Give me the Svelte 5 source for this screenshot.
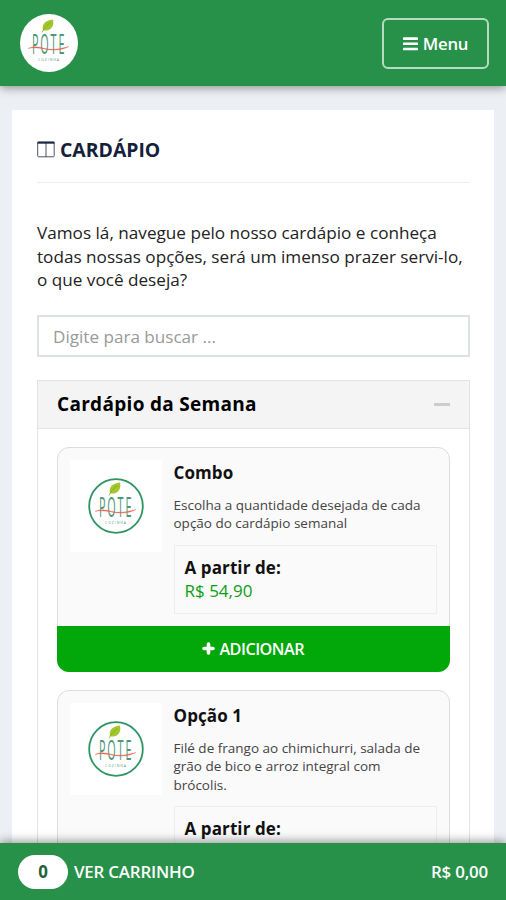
<script>
  let search = $state('');
  let open = $state(true);
  let cart = $state({ count: 0, total: 0 });

  const items = [
    {
      name: 'Combo',
      description: 'Escolha a quantidade desejada de cada opção do cardápio semanal',
      price: 54.9
    },
    {
      name: 'Opção 1',
      description: 'Filé de frango ao chimichurri, salada de grão de bico e arroz integral com brócolis.',
      price: 18.9
    }
  ];

  let filtered = $derived(
    items.filter((item) => item.name.toLowerCase().includes(search.toLowerCase()))
  );

  function formatPrice(value) {
    return 'R$ ' + value.toFixed(2).replace('.', ',');
  }

  function add(item) {
    cart.count += 1;
    cart.total += item.price;
  }
</script>

{#snippet logo(ring)}
  <svg class="logo" viewBox="0 0 58 58">
    <circle cx="29" cy="29" r={ring ? 26.8 : 29} fill="#fff" stroke={ring ? '#2c9561' : 'none'} stroke-width="1.8" />
    <path d="M23 16.500C21.500 10 25 6.500 33 5.500C34.500 12 31 17.500 23 16.500Z" fill="#a2c62c" />
    <path d="M22 18.500C24 14 27 11 30.500 8.500" fill="none" stroke="#7fa821" stroke-width=".7" />
    <text class="brand" transform="translate(12 40) scale(.4 1)" textLength="81" lengthAdjust="spacing">POTE</text>
    <path d="M8 34.500C14 31.500 19 33 25 34.500S37 35.500 49 32.500C43 36 35 36.800 27 35.500S14 33 8 34.500Z" fill="#e8604c" stroke="#e8604c" stroke-width=".3" />
    <text class="sub" x="18" y="47" textLength="21">COZINHA</text>
  </svg>
{/snippet}

<div class="page">
  <header>
    {@render logo(false)}
    <button class="menu">
      <svg width="15" height="14" viewBox="0 0 15 14" fill="#fff">
        <rect width="15" height="2.600" y=".3" rx=".6" />
        <rect width="15" height="2.600" y="5.500" rx=".6" />
        <rect width="15" height="2.600" y="10.700" rx=".6" />
      </svg>
      <span>Menu</span>
    </button>
  </header>

  <main>
    <div class="panel">
      <h1>
        <svg width="18" height="17" viewBox="0 0 18 17" fill="none" stroke="#4c5562">
          <rect x=".7" y="1" width="16.500" height="14.800" rx="1" />
          <path d="M9 2v14" />
          <path d="M.5 1.700h17" stroke="#1d2a42" stroke-width="2" />
        </svg>
        <span>CARDÁPIO</span>
      </h1>

      <p class="intro">
        Vamos lá, navegue pelo nosso cardápio e conheça todas nossas opções, será um imenso prazer servi-lo, o que você deseja?
      </p>

      <input type="text" placeholder="Digite para buscar ..." bind:value={search} />

      <section>
        <button class="section-header" onclick={() => (open = !open)}>
          <span>Cardápio da Semana</span>
          <i class="dash"></i>
        </button>
        {#if open}
          <div class="section-body">
            {#each filtered as item}
              <article>
                <div class="item">
                  <div class="thumb">{@render logo(true)}</div>
                  <div class="details">
                    <h2>{item.name}</h2>
                    <p>{item.description}</p>
                    <div class="price">
                      <strong>A partir de:</strong>
                      <span>{formatPrice(item.price)}</span>
                    </div>
                  </div>
                </div>
                <button class="add" onclick={() => add(item)}>
                  <svg width="13" height="13" viewBox="0 0 13 13">
                    <path d="M6.500 2v9M2 6.500h9" stroke="#fff" stroke-width="3.600" stroke-linecap="round" />
                  </svg>
                  <span>ADICIONAR</span>
                </button>
              </article>
            {/each}
          </div>
        {/if}
      </section>
    </div>
  </main>

  <footer>
    <span class="count">{cart.count}</span>
    <span class="cart">VER CARRINHO</span>
    <span class="total">{formatPrice(cart.total)}</span>
  </footer>
</div>

<style>
  :global(body) {
    margin: 0;
    background: #ecf0f4;
  }

  .page {
    display: flex;
    flex-direction: column;
    height: 100vh;
    overflow: hidden;
    font-family: 'Open Sans', 'Noto Sans', sans-serif;
    color: #111;
  }

  * {
    box-sizing: border-box;
  }

  button {
    font-family: inherit;
    cursor: pointer;
  }

  header {
    position: relative;
    z-index: 1;
    flex: none;
    display: flex;
    align-items: center;
    justify-content: space-between;
    height: 86px;
    padding: 0 17px 0 20px;
    background: #289149;
    box-shadow: 0 2px 9px rgba(0, 0, 0, 0.4);
  }

  .logo {
    display: block;
    width: 58px;
    height: 58px;
  }

  .brand {
    font-size: 27px;
    font-weight: 400;
    fill: #4d9679;
  }

  .sub {
    font-size: 3.5px;
    fill: #5b9c80;
  }

  .menu {
    display: flex;
    align-items: center;
    justify-content: center;
    gap: 5px;
    width: 107px;
    height: 51px;
    margin-top: 1px;
    padding: 0;
    color: #fff;
    font-size: 16.8px;
    font-weight: 600;
    letter-spacing: -0.3px;
    background: none;
    border: 2px solid #b5dcc0;
    border-radius: 6px;
  }

  main {
    flex: 1;
    min-height: 0;
    overflow: hidden;
    padding: 24px 12px 0;
  }

  .panel {
    padding: 24px 24.5px 24px 25px;
    background: #fff;
  }

  h1 {
    display: flex;
    align-items: center;
    gap: 5px;
    height: 49px;
    margin: 0;
    padding-bottom: 17px;
    border-bottom: 1px solid #eee;
    font-size: 19.4px;
    font-weight: 700;
    color: #15203a;
  }

  .intro {
    margin: 38px 0 23px;
    font-size: 17.15px;
    line-height: 23.5px;
    color: #222;
  }

  input {
    display: block;
    width: 100%;
    height: 42px;
    margin-bottom: 23px;
    padding: 1px 14px 0;
    font-family: inherit;
    font-size: 17.1px;
    border: 2px solid #dee1e5;
    border-radius: 0;
    outline: none;
  }

  input::placeholder {
    color: #999;
  }

  section {
    border: 1px solid #e2e3e5;
  }

  .section-header {
    display: flex;
    align-items: center;
    justify-content: space-between;
    width: 100%;
    height: 48px;
    padding: 0 19px;
    background: #f4f4f4;
    border: 0;
    border-bottom: 1px solid #e2e3e5;
    font-size: 19px;
    font-weight: 700;
    letter-spacing: 0.3px;
    color: #000;
  }

  .dash {
    width: 16px;
    height: 3px;
    background: #ccc;
  }

  .section-body {
    padding: 18px 18.5px;
  }

  article {
    margin-bottom: 18px;
    background: #fafafa;
    border: 1px solid #ddd;
    border-radius: 12px;
  }

  .item {
    display: flex;
    gap: 12px;
    padding: 12px;
  }

  .thumb {
    flex: none;
    display: flex;
    align-items: center;
    justify-content: center;
    width: 92px;
    height: 92px;
    background: #fff;
  }

  .details {
    flex: 1;
  }

  h2 {
    margin: 0 0 11px;
    font-size: 17px;
    font-weight: 700;
    letter-spacing: 0.1px;
    line-height: 25px;
  }

  .details p {
    margin: 0 0 12px;
    padding-right: 12px;
    font-size: 13.5px;
    line-height: 18.5px;
    color: #444;
  }

  .price {
    display: flex;
    flex-direction: column;
    height: 69px;
    padding: 10px;
    border: 1px solid #eceeef;
    font-size: 17px;
    line-height: 23.5px;
  }

  .price strong {
    font-weight: 700;
    letter-spacing: 0.1px;
  }

  .price span {
    color: #0a9e14;
  }

  .add {
    display: flex;
    align-items: center;
    justify-content: center;
    gap: 4px;
    width: calc(100% + 2px);
    height: 46px;
    margin: 0 -1px -1px;
    padding: 0;
    color: #fff;
    font-size: 16.2px;
    font-weight: 600;
    letter-spacing: -0.5px;
    background: #02a70a;
    border: 0;
    border-radius: 0 0 12px 12px;
  }

  footer {
    position: relative;
    z-index: 1;
    flex: none;
    display: flex;
    align-items: center;
    height: 57px;
    padding: 0 18px;
    color: #fff;
    font-size: 16.9px;
    font-weight: 600;
    letter-spacing: -0.2px;
    background: #289149;
    box-shadow: 0 -2px 9px rgba(0, 0, 0, 0.4);
  }

  .count {
    width: 50px;
    margin-right: 6px;
    border-radius: 17px;
    background: #fff;
    color: #24643a;
    font-weight: 700;
    line-height: 34px;
    text-align: center;
  }

  .total {
    margin-left: auto;
  }
</style>
